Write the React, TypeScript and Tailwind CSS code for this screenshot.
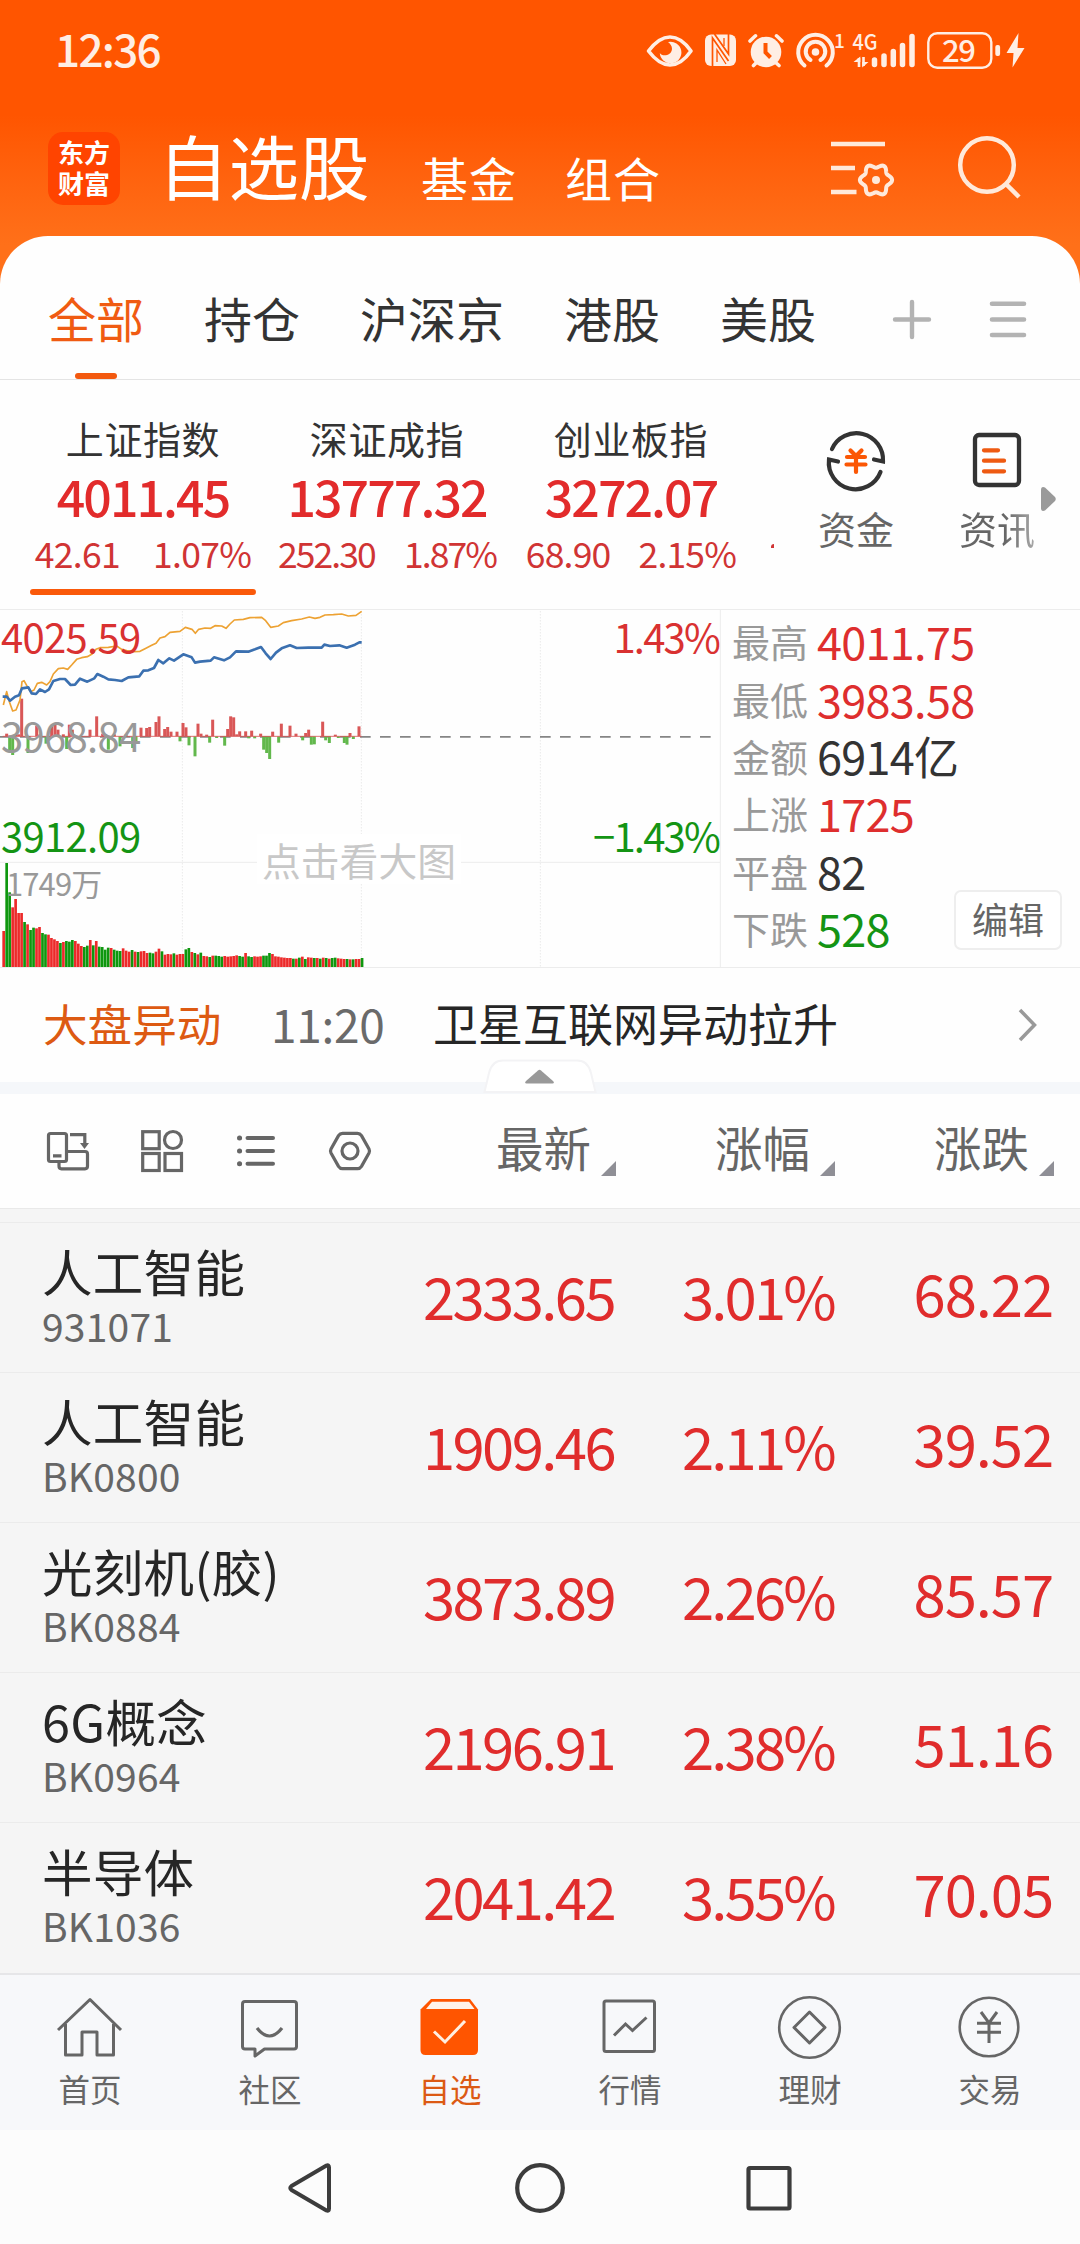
import React from "react";

type IconProps = { x: number; y: number; w: number; h: number; className?: string; children: React.ReactNode };

/** An icon whose view box starts at (x, y) and is drawn at its natural size. */
function Icon({ x, y, w, h, className = "", children }: IconProps) {
  return (
    <svg width={w} height={h} viewBox={`${x} ${y} ${w} ${h}`} fill="none" className={`shrink-0 overflow-visible ${className}`}>
      {children}
    </svg>
  );
}

const SVG_FONT = '"Noto Sans CJK SC", sans-serif';

const gear = Array.from({ length: 72 }, (_, i) => {
  const a = (i / 72) * Math.PI * 2;
  const r = 14.2 + 1.9 * Math.cos(6 * a);
  return `${(876 + r * Math.cos(a)).toFixed(2)},${(180 + r * Math.sin(a)).toFixed(2)}`;
}).join(" ");

function StatusBar() {
  const c = "#ffeee4";
  return (
    <div className="flex h-[96px] items-center justify-between pl-[55px] pr-[52px] text-[#ffeee4]">
      <span className="text-[44px] leading-[60px] font-medium tracking-[-1.7px]">12:36</span>
      <div className="flex pt-[6px]">
        <Icon x={645} y={30} w={53} h={42}>
          <path d="M648.5 51 C656 41 663 37 670 37 C677 37 684 41 691 51 C684 61 677 65 670 65 C663 65 656 61 648.5 51Z" stroke={c} strokeWidth="3.6" strokeLinejoin="round" />
          <path d="M668 42 A10.8 10.8 0 1 1 659.8 53 C662 57 671.500 56 672 49 C672.200 46 670 43.500 668 42Z" fill={c} />
        </Icon>
        <Icon x={698} y={30} w={44} h={42}>
          <rect x="705" y="34.500" width="31" height="31.500" rx="6" fill={c} />
          <path d="M712.500 66 V38 L728.500 61" stroke="#ff5500" strokeWidth="1.700" />
          <path d="M728.500 34 V54 L714.500 34" stroke="#ff5500" strokeWidth="1.700" />
          <path d="M717 62 V50 L726 64 M724 38 V46" stroke="#ff5500" strokeWidth="1.300" />
        </Icon>
        <Icon x={742} y={30} w={48} h={42}>
          <circle cx="766" cy="52" r="15.3" fill={c} />
          <path d="M750 41 L755.500 35.800 M782 41 L776.500 35.800 M757 62 L753.500 65.500 M775 62 L779 65.500" stroke={c} strokeWidth="3.6" strokeLinecap="round" />
          <path d="M765.500 43 V52.500 L770.500 57.500" stroke="#ff5500" strokeWidth="4" />
        </Icon>
        <Icon x={790} y={30} w={56} h={42}>
          <path d="M804.500 65.500 A17.300 17.300 0 1 1 826.500 65.500" stroke={c} strokeWidth="4" strokeLinecap="round" />
          <path d="M810.500 60 A9.800 9.800 0 1 1 820.500 60" stroke={c} strokeWidth="4" strokeLinecap="round" />
          <circle cx="815.500" cy="52" r="3.800" fill={c} />
          <text x="834" y="47.500" fontSize="19" fontWeight="500" fill={c} fontFamily={SVG_FONT}>1</text>
        </Icon>
        <Icon x={846} y={30} w={74} h={42}>
          <text x="852.500" y="50" fontSize="22" fontWeight="500" fill={c} fontFamily={SVG_FONT} textLength="25" lengthAdjust="spacingAndGlyphs">4G</text>
          <path d="M859 58 V67 M863.500 57 V66" stroke={c} strokeWidth="2.600" />
          <path d="M860.300 56.500 V62 H853.500Z M862.200 67.500 V62 H868.500Z" fill={c} />
          <path d="M874.500 60 V64.500 M884 56 V64.500 M893.300 51.500 V64.500 M902.500 45.500 V64.500 M912 36.500 V64.500" stroke={c} strokeWidth="5.500" strokeLinecap="round" />
        </Icon>
        <Icon x={920} y={30} w={83} h={42}>
          <rect x="928.300" y="33.300" width="63" height="34.500" rx="9" stroke={c} strokeWidth="2.400" />
          <text x="942" y="62" fontSize="31" fontWeight="500" fill={c} fontFamily={SVG_FONT} textLength="34">29</text>
          <rect x="995.300" y="45" width="4.800" height="11" rx="2" fill={c} />
        </Icon>
        <Icon x={1003} y={30} w={25} h={42}>
          <path d="M1018.500 33 L1006.500 53 H1013.500 L1012.500 67.500 L1024.500 48 H1017.500Z" fill={c} />
        </Icon>
      </div>
    </div>
  );
}

function TitleBar() {
  return (
    <div className="flex h-[140px] pl-[48px] pr-[56px] text-white">
      <div className="mt-[36px] flex h-[73px] w-[72px] flex-col items-center justify-center rounded-[15px] bg-[#ff4400] pb-[3px] text-[26px] leading-[31px] font-bold">
        <span>东方</span>
        <span>财富</span>
      </div>
      <span className="mt-[28px] ml-[38px] h-[80px] w-[216px] text-[70.500px] leading-[80px] whitespace-nowrap">自选股</span>
      <span className="mt-[51px] ml-[47px] h-[60px] text-[47px] leading-[60px] tracking-[1px]">基金</span>
      <span className="mt-[51px] ml-[48px] h-[60px] text-[47px] leading-[60px] tracking-[1px]">组合</span>
      <Icon x={828} y={136} w={68} h={64} className="mt-[40px] ml-auto">
        <path d="M831 144 H885 M831 168 H855 M831 192 H856.500" stroke="#ffe9da" strokeWidth="4.600" />
        <polygon points={gear} stroke="#ffe9da" strokeWidth="4" />
        <circle cx="876" cy="180" r="4" fill="#ffe9da" />
      </Icon>
      <Icon x={956} y={132} w={68} h={70} className="mt-[36px] ml-[60px]">
        <circle cx="987" cy="165" r="26.800" stroke="#ffe9da" strokeWidth="4.500" />
        <path d="M1006 184 L1019 197" stroke="#ffe9da" strokeWidth="4.500" />
      </Icon>
    </div>
  );
}

function MarketTabs() {
  const rest = ["持仓", "沪深京", "港股", "美股"];
  return (
    <div className="flex h-[144px] border-b border-[#e4e4e4] pl-[48px] pr-[52px] text-[#333333]">
      <div className="flex flex-1 gap-[60px] pt-[51px] text-[48px] leading-[60px]">
        <div className="flex flex-col items-center text-[#f05b12]">
          <span>全部</span>
          <span className="mt-[26px] h-[6px] w-[42px] rounded-full bg-[#f3590f]" />
        </div>
        {rest.map((t) => (
          <span key={t}>{t}</span>
        ))}
      </div>
      <Icon x={890} y={296} w={44} h={46} className="mt-[60px] mr-[54px]">
        <path d="M895 319.500 H929 M912 302 V337" stroke="#b3b3b3" strokeWidth="4.400" strokeLinecap="round" />
      </Icon>
      <Icon x={988} y={296} w={40} h={46} className="mt-[60px]">
        <path d="M992 303.700 H1024 M992 319.500 H1024 M992 335 H1024" stroke="#b3b3b3" strokeWidth="4.600" strokeLinecap="round" />
      </Icon>
    </div>
  );
}

const indices = [
  { name: "上证指数", value: "4011.45", diff: "42.61", pct: "1.07%", active: true, sub: "gap-[33px] tracking-[-0.7px]" },
  { name: "深证成指", value: "13777.32", diff: "252.30", pct: "1.87%", active: false, sub: "gap-[29px] tracking-[-1.9px]" },
  { name: "创业板指", value: "3272.07", diff: "68.90", pct: "2.15%", active: false, sub: "gap-[28px] tracking-[-0.8px]" },
];

function IndexCards() {
  return (
    <div className="relative flex h-[228px] pl-[30px]">
      <div className="flex gap-[18px]">
        {indices.map((i) => (
          <div key={i.name} className="flex w-[226px] flex-col items-center pt-[34px] whitespace-nowrap">
            <span className="text-[38px] leading-[48px] tracking-[0.6px] text-[#333333]">{i.name}</span>
            <span className="text-[50px] leading-[66px] font-medium tracking-[-1.9px] text-[#e22b2b]">{i.value}</span>
            <div className={`flex text-[35.500px] leading-[49px] text-[#d03434] ${i.sub}`}>
              <span>{i.diff}</span>
              <span>{i.pct}</span>
            </div>
            {i.active && <span className="mt-[12px] h-[6px] w-[226px] rounded-full bg-[#fa590a]" />}
          </div>
        ))}
      </div>
      <span className="mt-[164px] ml-[27px] h-[4px] w-[3px] rounded-tl-full bg-[#d03434]" />
      <div className="ml-[41px] flex gap-[59px] pt-[48px] text-[38px] leading-[52px] whitespace-nowrap text-[#666666]">
        <div className="flex w-[82px] flex-col items-center">
          <Icon x={824} y={429} w={64} h={64}>
            <path d="M832 450 A26.700 26.700 0 0 1 883 462.500 L874 460.500" stroke="#333" strokeWidth="4.200" strokeLinecap="round" />
            <path d="M880.500 473 A26.700 26.700 0 0 1 829 460.500 L838 462.500" stroke="#333" strokeWidth="4.200" strokeLinecap="round" />
            <path d="M850.500 451.500 L856 457 L861.500 451.500 M847 458 H865 M846.500 465.500 H865.500 M856 457 V473" stroke="#fb5705" strokeWidth="4.200" strokeLinecap="round" />
          </Icon>
          <span className="mt-[10px]">资金</span>
        </div>
        <div className="flex w-[82px] flex-col items-center">
          <Icon x={965} y={429} w={64} h={64}>
            <rect x="975" y="436" width="44" height="50" rx="4" stroke="#333" strokeWidth="4.300" />
            <path d="M984 451.300 H998 M984 461.700 H1004 M984 472.300 H1004" stroke="#ee5a12" strokeWidth="4.300" strokeLinecap="round" />
          </Icon>
          <span className="mt-[10px] bg-gradient-to-r from-[#666666] from-60% to-[#aaaaaa] bg-clip-text text-transparent">资讯</span>
        </div>
      </div>
      <Icon x={1040} y={485} w={20} h={30} className="mt-[104px] ml-[2px]">
        <path d="M1041 491 Q1041 487 1045 488.500 L1055 498 Q1056.500 500 1055 502 L1045 511.500 Q1041 513 1041 509Z" fill="#9a9a9a" />
      </Icon>
    </div>
  );
}

/* Turnover per interval; a negative number is a falling one. */
const volumes = [
  108, -312, -224, 179, 204, 162, 162, -135, 128, -111, -118, 116, 120, -102, -98, 97, 87, 83, 78, -72, 75, -78, -76, -81,
  78, 70, 63, -60, -64, 81, -65, 78, -61, -60, -52, -58, 57, -52, -49, -48, 56, 49, 46, -51, 46, -45, 47, 48, 42, -43, -41,
  46, 55, -47, 37, 39, 38, -41, 37, 39, 39, -53, -57, 45, -42, 38, -43, 33, 32, -30, 34, -34, -33, -31, 33, 31, 32, 33, 35,
  -33, -31, 42, -32, -30, 32, 31, 32, -34, -34, -42, 39, 32, 31, 29, 28, 27, 27, -25, 25, -28, 31, -24, 29, 28, -27, 27,
  -25, 28, -27, 25, -27, -28, 26, 25, 24, -24, 23, -23, 24, 24, -27,
];

/* Momentum bars: [x, signed height]. */
const momentum: [number, number][] = [
  [20, 8], [29, -48], [38, -56], [47, 4], [56, 6], [65, 113], [84, -50], [110, 32], [119, 5], [138, -22], [155, 30], [165, 38],
  [174, 20], [190, 6], [200, -38], [208, 35], [217, 20], [235, -6], [270, 20], [290, 60], [308, 8], [325, -40], [343, 6],
  [360, -30], [378, 6], [398, -35], [408, -20], [423, 26], [440, 25], [449, 28], [468, 43], [477, 60], [494, 22], [503, 28],
  [513, 14], [531, 14], [540, -15], [549, 40], [558, 27], [567, -27], [585, -60], [594, 38], [603, 8], [620, 5], [629, -19],
  [638, 50], [650, -5], [674, -28], [683, 22], [692, 60], [701, 57], [710, 6], [719, 15], [737, 15], [746, -6], [755, 17],
  [764, -6], [782, 8], [791, -40], [800, -50], [809, -68], [818, 14], [836, -19], [844, 38], [870, 32], [888, 8], [908, -12],
  [917, 10], [926, 20], [934, -25], [943, -24], [968, 44], [977, -12], [988, -20], [1006, 5], [1015, -5], [1033, -20],
  [1041, -25], [1050, 10], [1060, -8], [1077, 30],
];

const averageLine =
  "10,315 20,275 28,305 38,333 48,330 60,300 66,245 72,242 82,260 92,275 102,270 112,250 125,247 140,255 150,245 160,222 175,206 190,204 203,208 215,195 230,178 245,173 262,170 275,163 288,148 300,143 325,142 350,138 365,148 380,152 400,155 420,154 435,146 455,136 468,130 480,114 495,110 510,97 540,94 556,82 576,88 586,100 596,88 615,84 632,85 645,77 665,78 678,85 690,72 703,60 730,58 750,53 785,52 797,62 812,82 835,78 850,68 875,62 905,57 928,51 945,55 960,52 975,45 1000,44 1025,42 1045,48 1068,46 1085,34";
const indexLine =
  "8,290 20,290 30,302 45,290 57,286 66,265 85,262 95,280 108,282 120,268 135,276 147,268 160,243 180,237 195,237 212,255 225,254 240,236 262,245 283,235 292,222 310,230 325,238 345,240 365,243 385,232 418,229 430,212 445,211 462,204 475,180 490,190 508,175 522,182 550,163 575,172 585,188 600,185 632,182 642,172 672,181 690,172 708,154 745,155 765,148 783,141 797,160 812,177 828,158 845,145 870,136 890,144 925,143 965,143 973,134 990,138 1018,136 1040,143 1065,134 1078,127 1085,127";

function Chart() {
  return (
    <div className="relative h-[359px] w-[721px] text-[40px] leading-[50px] tracking-[-0.7px] whitespace-nowrap">
      <svg width="721" height="359" viewBox="0 27 2163 1077" fill="none">
        <path d="M0 28.500 H2163 M0 1102.500 H2163 M0 787 H2160 M2161 28 V1102" stroke="#ececec" strokeWidth="3" />
        <path d="M547 34 V1100 M1084 34 V1100 M1621 34 V1100" stroke="#dedede" strokeWidth="3" strokeDasharray="3 6" />
        <path d="M0 410.500 H2140" stroke="#858585" strokeWidth="5" strokeDasharray="32 28" />
        {momentum.map(([x, v]) => (
          <rect key={x} x={x - 4.5} y={v > 0 ? 409 - v : 409} width="9" height={Math.abs(v)} fill={v > 0 ? "#d95757" : "#62b84c"} />
        ))}
        <path d="M8 409 H1085" stroke="#d95757" strokeWidth="2.500" />
        {volumes.map((v, i) => (
          <rect key={i} x={7 + i * 8.96} y={1101 - Math.abs(v)} width="8" height={Math.abs(v)} fill={v > 0 ? "#ec2a2a" : "#0e970e"} />
        ))}
        <polyline points={averageLine} stroke="#eda233" strokeWidth="5" strokeLinejoin="round" />
        <polyline points={indexLine} stroke="#3b70b0" strokeWidth="8" strokeLinejoin="round" />
      </svg>
      <span className="absolute top-[2px] left-[1px] text-[#d93131]">4025.59</span>
      <span className="absolute top-[101px] left-[1px] text-[#999999]">3968.84</span>
      <span className="absolute top-[201px] left-[1px] text-[#149414]">3912.09</span>
      <span className="absolute top-[2px] right-[2px] tracking-[-1.8px] text-[#d93131]">1.43%</span>
      <span className="absolute top-[201px] right-[2px] tracking-[-1.8px] text-[#149414]">−1.43%</span>
      <span className="absolute top-[249px] left-[6px] text-[31px] tracking-[-0.9px] text-[#999999]">1749万</span>
      <span className="absolute top-[225px] left-[257px] w-[204px] bg-white text-center text-[38.800px] tracking-[0px] text-[#c8c8c8]">点击看大图</span>
    </div>
  );
}

const stats: [string, string, string][] = [
  ["最高", "4011.75", "text-[#de2e2e]"],
  ["最低", "3983.58", "text-[#de2e2e]"],
  ["金额", "6914亿", "text-[#333333]"],
  ["上涨", "1725", "text-[#de2e2e]"],
  ["平盘", "82", "text-[#333333]"],
  ["下跌", "528", "text-[#149414]"],
];

function Stats() {
  return (
    <div className="relative flex-1 border-y border-[#ececec] pt-[2px] pl-[11px]">
      {stats.map(([label, value, color]) => (
        <div key={label} className="flex h-[57.4px] items-center whitespace-nowrap">
          <span className="w-[85px] text-[38px] leading-[57px] text-[#999999]">{label}</span>
          <span className={`text-[45px] leading-[57px] tracking-[-0.7px] ${color}`}>{value}</span>
        </div>
      ))}
      <button className="absolute right-[18px] bottom-[17px] flex h-[60px] w-[108px] items-center justify-center rounded-[7px] border-2 border-[#eeeeee] bg-white pb-[4px] text-[36px] leading-[50px] text-[#666666]">
        编辑
      </button>
    </div>
  );
}

function NewsRow() {
  return (
    <div className="relative flex h-[126px] border-b-[12px] border-[#f5f7fa] pr-[42px] pl-[43px] text-[44.6px] whitespace-nowrap">
      <span className="mt-[25px] w-[228px] leading-[60px] text-[#dd5a12]">大盘异动</span>
      <span className="mt-[25px] w-[162px] text-[46px] leading-[60px] tracking-[-0.3px] text-[#6a6a6a]">11:20</span>
      <span className="mt-[25px] text-[45px] leading-[60px] text-[#262626]">卫星互联网异动拉升</span>
      <Icon x={1016} y={1005} w={22} h={40} className="mt-[37px] ml-auto">
        <path d="M1020 1010 L1034.500 1025 L1020 1040" stroke="#999" strokeWidth="3.500" />
      </Icon>
      <div className="absolute bottom-[-12px] left-[482px]">
        <Icon x={482} y={1058} w={116} h={36}>
          <path d="M484.500 1092 L489 1073 Q492 1060.500 503 1060.500 H577 Q588 1060.500 591 1073 L595.500 1092Z" fill="#fff" stroke="#f3f3f5" strokeWidth="2" />
          <path d="M526.500 1083.500 Q524 1083 526 1081 L538 1070.500 Q539.500 1069.200 541 1070.500 L553 1081 Q555 1083 552.500 1083.500Z" fill="#999" />
        </Icon>
      </div>
    </div>
  );
}

function SortLabel({ text, className }: { text: string; className: string }) {
  return (
    <div className={`flex ${className}`}>
      <span className="mt-[23px] leading-[60px]">{text}</span>
      <Icon x={0} y={0} w={15} h={15} className="mt-[67px] ml-[10px]">
        <path d="M0 15 H15 V0Z" fill="#8f8f96" />
      </Icon>
    </div>
  );
}

function Toolbar() {
  const s = { stroke: "#666666", strokeWidth: 3.2 };
  return (
    <div className="flex h-[115px] border-b border-[#e9e9e9] pl-[44px] text-[47.5px] text-[#666666]">
      <div className="flex gap-[46px] pt-[32px]">
        <Icon x={44} y={1126} w={48} h={48}>
          <rect x="48.500" y="1133.500" width="18" height="28" rx="2" {...s} />
          <path d="M53 1155.800 H61.500 M70 1134.600 H84.800 V1145 M66.500 1151.500 H85 Q87.500 1151.500 87.500 1154 V1166 Q87.500 1168.800 85 1168.800 H61.500 Q59 1168.800 59 1166 V1162" {...s} />
          <path d="M80 1143 H89 L84.500 1149Z" fill="#666" />
        </Icon>
        <Icon x={138} y={1126} w={48} h={48}>
          <rect x="142.700" y="1131.700" width="16.500" height="17" {...s} />
          <circle cx="173" cy="1140" r="8.500" {...s} />
          <rect x="142.700" y="1153.500" width="16.500" height="17" {...s} />
          <rect x="165" y="1153.500" width="16.500" height="17" {...s} />
        </Icon>
        <Icon x={232} y={1126} w={48} h={48}>
          <path d="M247.500 1138 H273 M247.500 1151 H273 M247.500 1163.700 H273" stroke="#666" strokeWidth="4" strokeLinecap="round" />
          <path d="M239.500 1138 h.1 M239.500 1151 h.1 M239.500 1163.700 h.1" stroke="#666" strokeWidth="5" strokeLinecap="round" />
        </Icon>
        <Icon x={326} y={1126} w={48} h={48}>
          <path d="M342.500 1133.300 H357.500 Q360 1133.300 361.500 1135.600 L369 1149 Q370 1151 369 1153 L361.500 1166.400 Q360 1168.700 357.500 1168.700 H342.500 Q340 1168.700 338.500 1166.400 L331 1153 Q330 1151 331 1149 L338.500 1135.600 Q340 1133.300 342.500 1133.300Z" {...s} />
          <circle cx="350" cy="1151" r="8" {...s} />
        </Icon>
      </div>
      <SortLabel text="最新" className="ml-[122px] w-[219px]" />
      <SortLabel text="涨幅" className="w-[219px]" />
      <SortLabel text="涨跌" className="" />
    </div>
  );
}

const rows = [
  ["人工智能", "931071", "2333.65", "3.01%", "68.22"],
  ["人工智能", "BK0800", "1909.46", "2.11%", "39.52"],
  ["光刻机(胶)", "BK0884", "3873.89", "2.26%", "85.57"],
  ["6G概念", "BK0964", "2196.91", "2.38%", "51.16"],
  ["半导体", "BK1036", "2041.42", "3.55%", "70.05"],
];

function StockList() {
  return (
    <div className="h-[764px] bg-[#f5f5f5] pt-[13px]">
      {rows.map(([name, code, last, pct, diff]) => (
        <div key={code} className="flex h-[150px] border-t border-[#ebebeb] pl-[42px] whitespace-nowrap">
          <div className="flex w-[340px] flex-col pt-[15px]">
            <span className="text-[50.500px] leading-[64px] tracking-[0.3px] text-[#262626]">{name}</span>
            <span className="text-[39px] leading-[46px] tracking-[0.2px] text-[#666666]">{code}</span>
          </div>
          <div className="flex text-right text-[58px] leading-[70px] text-[#e02c2c]">
            <span className="mt-[37px] w-[232px] tracking-[-2.6px]">{last}</span>
            <span className="mt-[37px] w-[220px] tracking-[-2.800px]">{pct}</span>
            <span className="mt-[34px] w-[219px] tracking-[-1.100px]">{diff}</span>
          </div>
        </div>
      ))}
    </div>
  );
}

function BottomNav() {
  const s = { stroke: "#666666", strokeWidth: 3 };
  const items: { label: string; active?: boolean; icon: React.ReactNode }[] = [
    {
      label: "首页",
      icon: (
        <path d="M58 2030 L90 1999.500 L121 2030 M65.500 2024 V2055 H82 V2032 H97 V2055 H113.500 V2024" {...s} strokeLinejoin="round" />
      ),
    },
    {
      label: "社区",
      icon: (
        <>
          <path d="M245 2001.500 H294 Q296.500 2001.500 296.500 2004 V2046.500 Q296.500 2049 294 2049 H264.500 L255 2056 V2049 H245 Q242.500 2049 242.500 2046.500 V2004 Q242.500 2001.500 245 2001.500Z" {...s} strokeLinejoin="round" />
          <path d="M257 2028 Q269.500 2044 282 2028" {...s} strokeWidth="3.200" />
        </>
      ),
    },
    {
      label: "自选",
      active: true,
      icon: (
        <>
          <path d="M431 1999 H470 L478 2009.500 V2050 Q478 2055 473 2055 H425.500 Q420.500 2055 420.500 2050 V2009.500Z" fill="#ff5500" />
          <path d="M432 2001.800 H469 L474.500 2009 H426Z" fill="#fff3ea" />
          <path d="M434 2031.500 L445 2042 L465 2021" stroke="#ffefe0" strokeWidth="3" />
        </>
      ),
    },
    {
      label: "行情",
      icon: (
        <>
          <rect x="604" y="2001" width="50.500" height="50.500" rx="2" {...s} />
          <path d="M614 2035.500 L625.500 2024 L632.500 2030.500 L646.500 2017.500" {...s} />
        </>
      ),
    },
    {
      label: "理财",
      icon: (
        <>
          <circle cx="809.500" cy="2027.500" r="30.300" {...s} strokeWidth="2.600" />
          <path d="M809.500 2012 L825 2027.500 L809.500 2043 L794 2027.500Z" {...s} strokeLinejoin="round" />
        </>
      ),
    },
    {
      label: "交易",
      icon: (
        <>
          <circle cx="989" cy="2027" r="29.300" {...s} strokeWidth="2.600" />
          <path d="M981 2012 L989 2023 L997 2012 M977 2023.300 H1001 M977 2032.300 H1001 M989 2023 V2043" {...s} />
        </>
      ),
    },
  ];
  return (
    <div className="grid h-[157px] grid-cols-6 border-t-2 border-[#e6e6e8] bg-[#f7f8fa] pt-[19px] text-[31.500px] leading-[44px]">
      {items.map((it, i) => (
        <div key={it.label} className={`flex flex-col items-center ${it.active ? "text-[#dc5a14]" : "text-[#666666]"}`}>
          <Icon x={i * 180 + 50} y={1994} w={80} h={72}>
            {it.icon}
          </Icon>
          <span>{it.label}</span>
        </div>
      ))}
    </div>
  );
}

function SystemNav() {
  return (
    <div className="flex h-[115px] items-center justify-center gap-[166px] bg-[#fcfcfc]">
      <Icon x={277} y={2155} w={64} h={64}>
        <path d="M325.500 2164.500 Q328 2163.500 328 2166.500 V2207.500 Q328 2210.500 325.500 2209.500 L290.500 2189 Q288 2187 290.500 2185Z" stroke="#3c3c3c" strokeWidth="4" strokeLinejoin="round" />
      </Icon>
      <Icon x={508} y={2155} w={64} h={64}>
        <circle cx="540" cy="2187" r="22.800" stroke="#3c3c3c" strokeWidth="4.200" />
      </Icon>
      <Icon x={738} y={2155} w={64} h={64}>
        <rect x="748.500" y="2167" width="41" height="40.500" rx="1.500" stroke="#3c3c3c" strokeWidth="4.200" />
      </Icon>
    </div>
  );
}

export default function App() {
  return (
    <div className="h-[2244px] w-[1080px] overflow-hidden bg-gradient-to-b from-[#ff5500] from-[115px] to-[#ff7019] to-[245px] font-['Noto_Sans_CJK_SC',sans-serif]">
      <StatusBar />
      <TitleBar />
      <div className="rounded-t-[48px] bg-[#fefefe]">
        <MarketTabs />
        <IndexCards />
        <div className="mt-[1px] flex">
          <Chart />
          <Stats />
        </div>
        <NewsRow />
        <Toolbar />
        <StockList />
      </div>
      <BottomNav />
      <SystemNav />
    </div>
  );
}
